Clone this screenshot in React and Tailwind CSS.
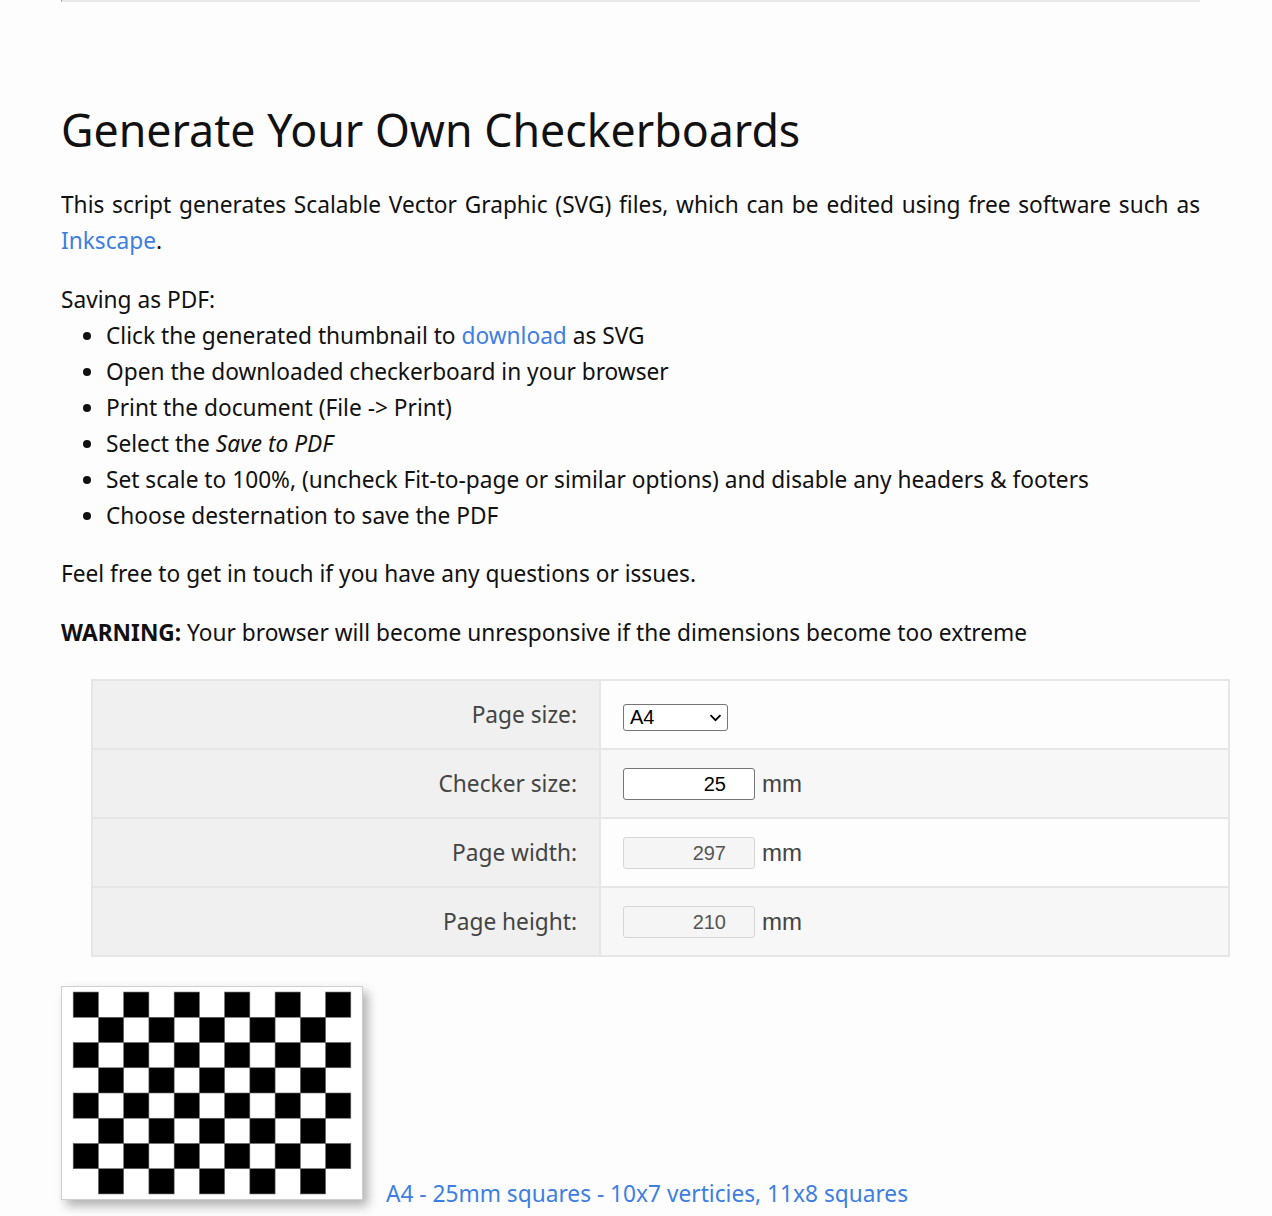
import { useState } from "react"

const body = "font-['Noto_Sans','Open_Sans',sans-serif]"
const link = "text-[#3d7fdf] hover:underline"

const steps = [
  <>Click the generated thumbnail to <a href="#" className={link}>download</a> as SVG</>,
  <>Open the downloaded checkerboard in your browser</>,
  <>Print the document (File -&gt; Print)</>,
  <>Select the <em>Save to PDF</em></>,
  <>Set scale to 100%, (uncheck Fit-to-page or similar options) and disable any headers &amp; footers</>,
  <>Choose desternation to save the PDF</>,
]

function Board({ cols = 11, rows = 8, size = 25 }) {
  const offX = (297 - cols * size) / 2
  const offY = (210 - rows * size) / 2
  const cells = []
  for (let r = 0; r < rows; r++) {
    for (let c = 0; c < cols; c++) {
      if ((r + c) % 2 === 0) {
        cells.push(
          <rect key={`${r}-${c}`} x={offX + c * size} y={offY + r * size} width={size} height={size} fill="#000" stroke="#666" strokeWidth="0.6" />,
        )
      }
    }
  }
  return (
    <svg viewBox="0 0 297 210" width="300" height="212" className="block">
      <rect width="297" height="210" fill="#fff" />
      {cells}
    </svg>
  )
}

function Row({ label, shade, children }) {
  return (
    <div className="grid grid-cols-[508px_1fr] border-b-2 border-[#e6e6e6] last:border-b-0">
      <div className="bg-[#f0f0f0] border-r-2 border-[#e6e6e6] h-[67px] flex items-center justify-end pr-[22px] text-[#444]">
        {label}
      </div>
      <div className={`${shade ? "bg-[#f7f7f7]" : "bg-[#fdfdfd]"} flex items-center pl-[22px]`}>{children}</div>
    </div>
  )
}

function MmInput({ value, disabled }) {
  return (
    <div className="flex items-center gap-[7px] font-['Liberation_Sans',Arial,sans-serif]">
      <input
        type="text"
        readOnly
        value={value}
        disabled={disabled}
        className={
          disabled
            ? "w-[132px] h-[32px] rounded-[3px] border border-[#d6d6d6] bg-[#f5f5f5] text-right pr-[28px] text-[20px] text-[#555]"
            : "w-[132px] h-[32px] rounded-[3px] border border-[#767676] bg-white text-right pr-[28px] text-[20px] text-black"
        }
      />
      <span className="text-[24px] text-[#444]">mm</span>
    </div>
  )
}

export default function App() {
  const [page, setPage] = useState("A4")

  return (
    <div className={`min-h-[1216px] bg-[#fdfdfd] text-[#111] ${body} text-[22.7px] leading-[36px]`}>
      <div className="ml-[61px] w-[1139px]">
        <div className="h-[2px] border-b-2 border-r border-[#e8e8e8] border-l border-l-[#777]" />

        <h1 className="mt-[98px] text-[44.7px] leading-[60px] font-normal">Generate Your Own Checkerboards</h1>

        <p className="mt-[27px] text-justify">
          This script generates Scalable Vector Graphic (SVG) files, which can be edited using free software such as{" "}
          <a href="#" className={link}>Inkscape</a>.
        </p>

        <p className="mt-[23px]">Saving as PDF:</p>
        <ul className="list-disc pl-[45px]">
          {steps.map((s, i) => (
            <li key={i}>{s}</li>
          ))}
        </ul>

        <p className="mt-[22px]">Feel free to get in touch if you have any questions or issues.</p>

        <p className="mt-[23px]">
          <strong>WARNING:</strong> Your browser will become unresponsive if the dimensions become too extreme
        </p>

        <div className="mt-[28px] ml-[30px] w-[1139px] border-2 border-[#e6e6e6]">
          <Row label="Page size:">
            <div className="relative flex items-center mt-[6px]">
              <select
                value={page}
                onChange={(e) => setPage(e.target.value)}
                className="appearance-none w-[105px] h-[27px] rounded-[3px] border border-[#767676] bg-white pl-[6px] leading-[25px] font-['Liberation_Sans',Arial,sans-serif] text-[20px] text-black"
              >
                <option>A4</option>
                <option>A3</option>
                <option>Letter</option>
              </select>
              <svg viewBox="0 0 12 8" className="pointer-events-none absolute right-[6px] top-1/2 -translate-y-1/2 w-[13px] h-[8px]">
                <path d="M1 1.2 L6 6.2 L11 1.2" fill="none" stroke="#000" strokeWidth="1.8" />
              </svg>
            </div>
          </Row>
          <Row label="Checker size:" shade>
            <MmInput value="25" />
          </Row>
          <Row label="Page width:">
            <MmInput value="297" disabled />
          </Row>
          <Row label="Page height:" shade>
            <MmInput value="210" disabled />
          </Row>
        </div>

        <div className="mt-[29px] flex items-end gap-[23px] pb-[10px]">
          <a href="#" className="block border border-[#cfcfcf] shadow-[5px_6px_10px_rgba(0,0,0,0.3)]">
            <Board />
          </a>
          <a href="#" className={`${link} leading-[28px] -mb-[8px]`}>
            A4 - 25mm squares - 10x7 verticies, 11x8 squares
          </a>
        </div>
      </div>
    </div>
  )
}
